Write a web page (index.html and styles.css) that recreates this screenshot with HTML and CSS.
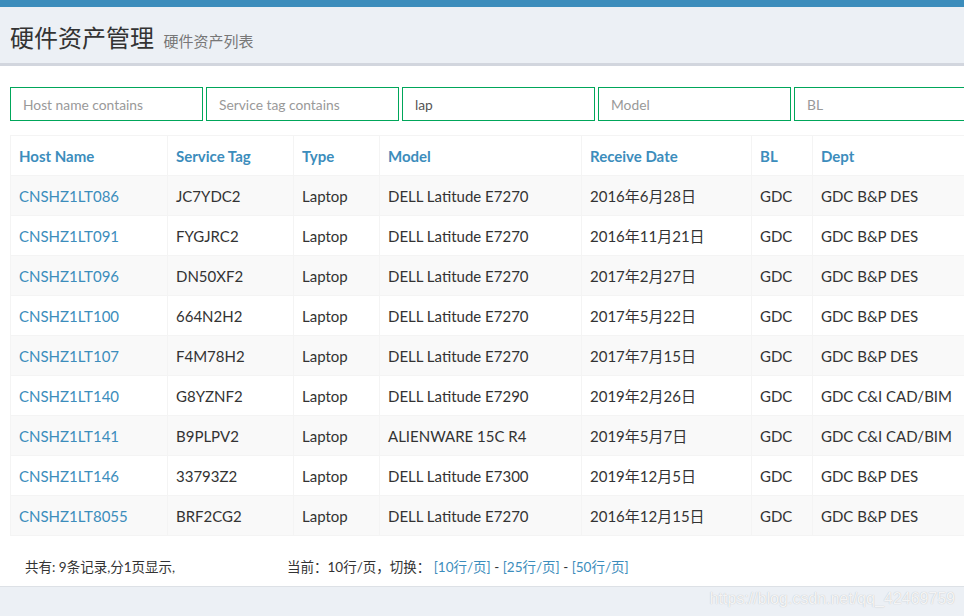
FILE: index.html
```html
<!DOCTYPE html>
<html lang="zh">
<head>
<meta charset="utf-8">
<title>硬件资产管理</title>
<link rel="stylesheet" href="styles.css">
</head>
<body>
<div class="topbar"></div>
<section class="content-header">
  <h1>硬件资产管理 <small>硬件资产列表</small></h1>
</section>
<section class="box">
  <div class="filters">
    <input class="filter" type="text" placeholder="Host name contains">
    <input class="filter" type="text" placeholder="Service tag contains">
    <input class="filter" type="text" value="lap">
    <input class="filter" type="text" placeholder="Model">
    <input class="filter" type="text" placeholder="BL">
  </div>
  <table class="grid">
    <colgroup>
      <col class="c1"><col class="c2"><col class="c3"><col class="c4"><col class="c5"><col class="c6"><col class="c7">
    </colgroup>
    <thead>
      <tr><th>Host Name</th><th>Service Tag</th><th>Type</th><th>Model</th><th>Receive Date</th><th>BL</th><th>Dept</th></tr>
    </thead>
    <tbody>
      <tr><td><a href="#">CNSHZ1LT086</a></td><td>JC7YDC2</td><td>Laptop</td><td>DELL Latitude E7270</td><td>2016年6月28日</td><td>GDC</td><td>GDC B&amp;P DES</td></tr>
      <tr><td><a href="#">CNSHZ1LT091</a></td><td>FYGJRC2</td><td>Laptop</td><td>DELL Latitude E7270</td><td>2016年11月21日</td><td>GDC</td><td>GDC B&amp;P DES</td></tr>
      <tr><td><a href="#">CNSHZ1LT096</a></td><td>DN50XF2</td><td>Laptop</td><td>DELL Latitude E7270</td><td>2017年2月27日</td><td>GDC</td><td>GDC B&amp;P DES</td></tr>
      <tr><td><a href="#">CNSHZ1LT100</a></td><td>664N2H2</td><td>Laptop</td><td>DELL Latitude E7270</td><td>2017年5月22日</td><td>GDC</td><td>GDC B&amp;P DES</td></tr>
      <tr><td><a href="#">CNSHZ1LT107</a></td><td>F4M78H2</td><td>Laptop</td><td>DELL Latitude E7270</td><td>2017年7月15日</td><td>GDC</td><td>GDC B&amp;P DES</td></tr>
      <tr><td><a href="#">CNSHZ1LT140</a></td><td>G8YZNF2</td><td>Laptop</td><td>DELL Latitude E7290</td><td>2019年2月26日</td><td>GDC</td><td>GDC C&amp;I CAD/BIM</td></tr>
      <tr><td><a href="#">CNSHZ1LT141</a></td><td>B9PLPV2</td><td>Laptop</td><td>ALIENWARE 15C R4</td><td>2019年5月7日</td><td>GDC</td><td>GDC C&amp;I CAD/BIM</td></tr>
      <tr><td><a href="#">CNSHZ1LT146</a></td><td>33793Z2</td><td>Laptop</td><td>DELL Latitude E7300</td><td>2019年12月5日</td><td>GDC</td><td>GDC B&amp;P DES</td></tr>
      <tr><td><a href="#">CNSHZ1LT8055</a></td><td>BRF2CG2</td><td>Laptop</td><td>DELL Latitude E7270</td><td>2016年12月15日</td><td>GDC</td><td>GDC B&amp;P DES</td></tr>
    </tbody>
  </table>
  <div class="pager">
    <span class="total">共有: 9条记录,分1页显示,</span>
    <span class="sizes">当前：10行/页，切换： <a href="#">[10行/页]</a> - <a href="#">[25行/页]</a> - <a href="#">[50行/页]</a></span>
  </div>
</section>
<div class="watermark">https://blog.csdn.net/qq_42469759</div>
</body>
</html>
```
FILE: styles.css
```css
html, body {
  margin: 0;
  padding: 0;
  background: #ecf0f5;
  height: 100%;
  overflow: hidden;
}
body {
  font-family: Lato, "Noto Sans CJK SC", sans-serif;
  font-size: 15px;
  color: #333;
  position: relative;
}
.topbar {
  height: 7px;
  background: #3c8dbc;
}
.content-header {
  height: 56px;
  padding: 0 10px;
  display: flex;
  align-items: center;
}
.content-header h1 {
  margin: 0;
  font-size: 24px;
  font-weight: 400;
  color: #333;
  font-family: "Noto Sans CJK SC", sans-serif;
  line-height: 1;
  padding-top: 3px;
}
.content-header small {
  font-size: 15px;
  color: #777;
  margin-left: 4px;
}
.box {
  background: #fff;
  border-top: 3px solid #d2d6de;
  border-bottom: 1px solid #dde1e6;
  height: 499px;
  overflow: hidden;
  padding: 21px 0 0 10px;
  box-sizing: content-box;
}
.filters {
  display: flex;
  gap: 3px;
  width: 1100px;
}
.filter {
  width: 193px;
  height: 34px;
  box-sizing: border-box;
  border: 1px solid #00a65a;
  padding: 0 12px;
  font-family: Lato, "Noto Sans CJK SC", sans-serif;
  font-size: 13.8px;
  color: #555;
  outline: none;
  flex: none;
  margin: 0;
}
.filter::placeholder {
  color: #999;
}
.grid {
  margin-top: 14px;
  border-collapse: collapse;
  table-layout: fixed;
  width: 1000px;
  border: 1px solid #f4f4f4;
}
.c1 { width: 157px; }
.c2 { width: 126px; }
.c3 { width: 86px; }
.c4 { width: 202px; }
.c5 { width: 170px; }
.c6 { width: 61px; }
.c7 { width: 198px; }
.grid th, .grid td {
  border: 1px solid #f4f4f4;
  padding: 0 8px;
  height: 39px;
  text-align: left;
  white-space: nowrap;
  font-family: Lato, "Noto Sans CJK SC", sans-serif;
}
.grid th {
  color: #3c8dbc;
  font-weight: 700;
  height: 39px;
  padding-top: 0;
  padding-bottom: 0;
}
.grid tbody tr:nth-child(odd) {
  background: #f9f9f9;
}
.grid a {
  color: #3c8dbc;
  text-decoration: none;
}
.pager {
  height: 40px;
  padding-top: 10px;
  display: flex;
  align-items: center;
  font-size: 13.5px;
  font-family: Lato, "Noto Sans CJK SC", sans-serif;
  color: #333;
  padding-left: 15px;
}
.pager .total {
  width: 262px;
  flex: none;
}
.pager a {
  color: #3c8dbc;
  text-decoration: none;
}
.watermark {
  position: absolute;
  right: 9px;
  bottom: 8px;
  font-family: "Liberation Sans", Arial, sans-serif;
  font-size: 16px;
  color: rgba(255,255,255,0.85);
  text-shadow: 0 0 1px rgba(0,0,0,0.25);
}
```
